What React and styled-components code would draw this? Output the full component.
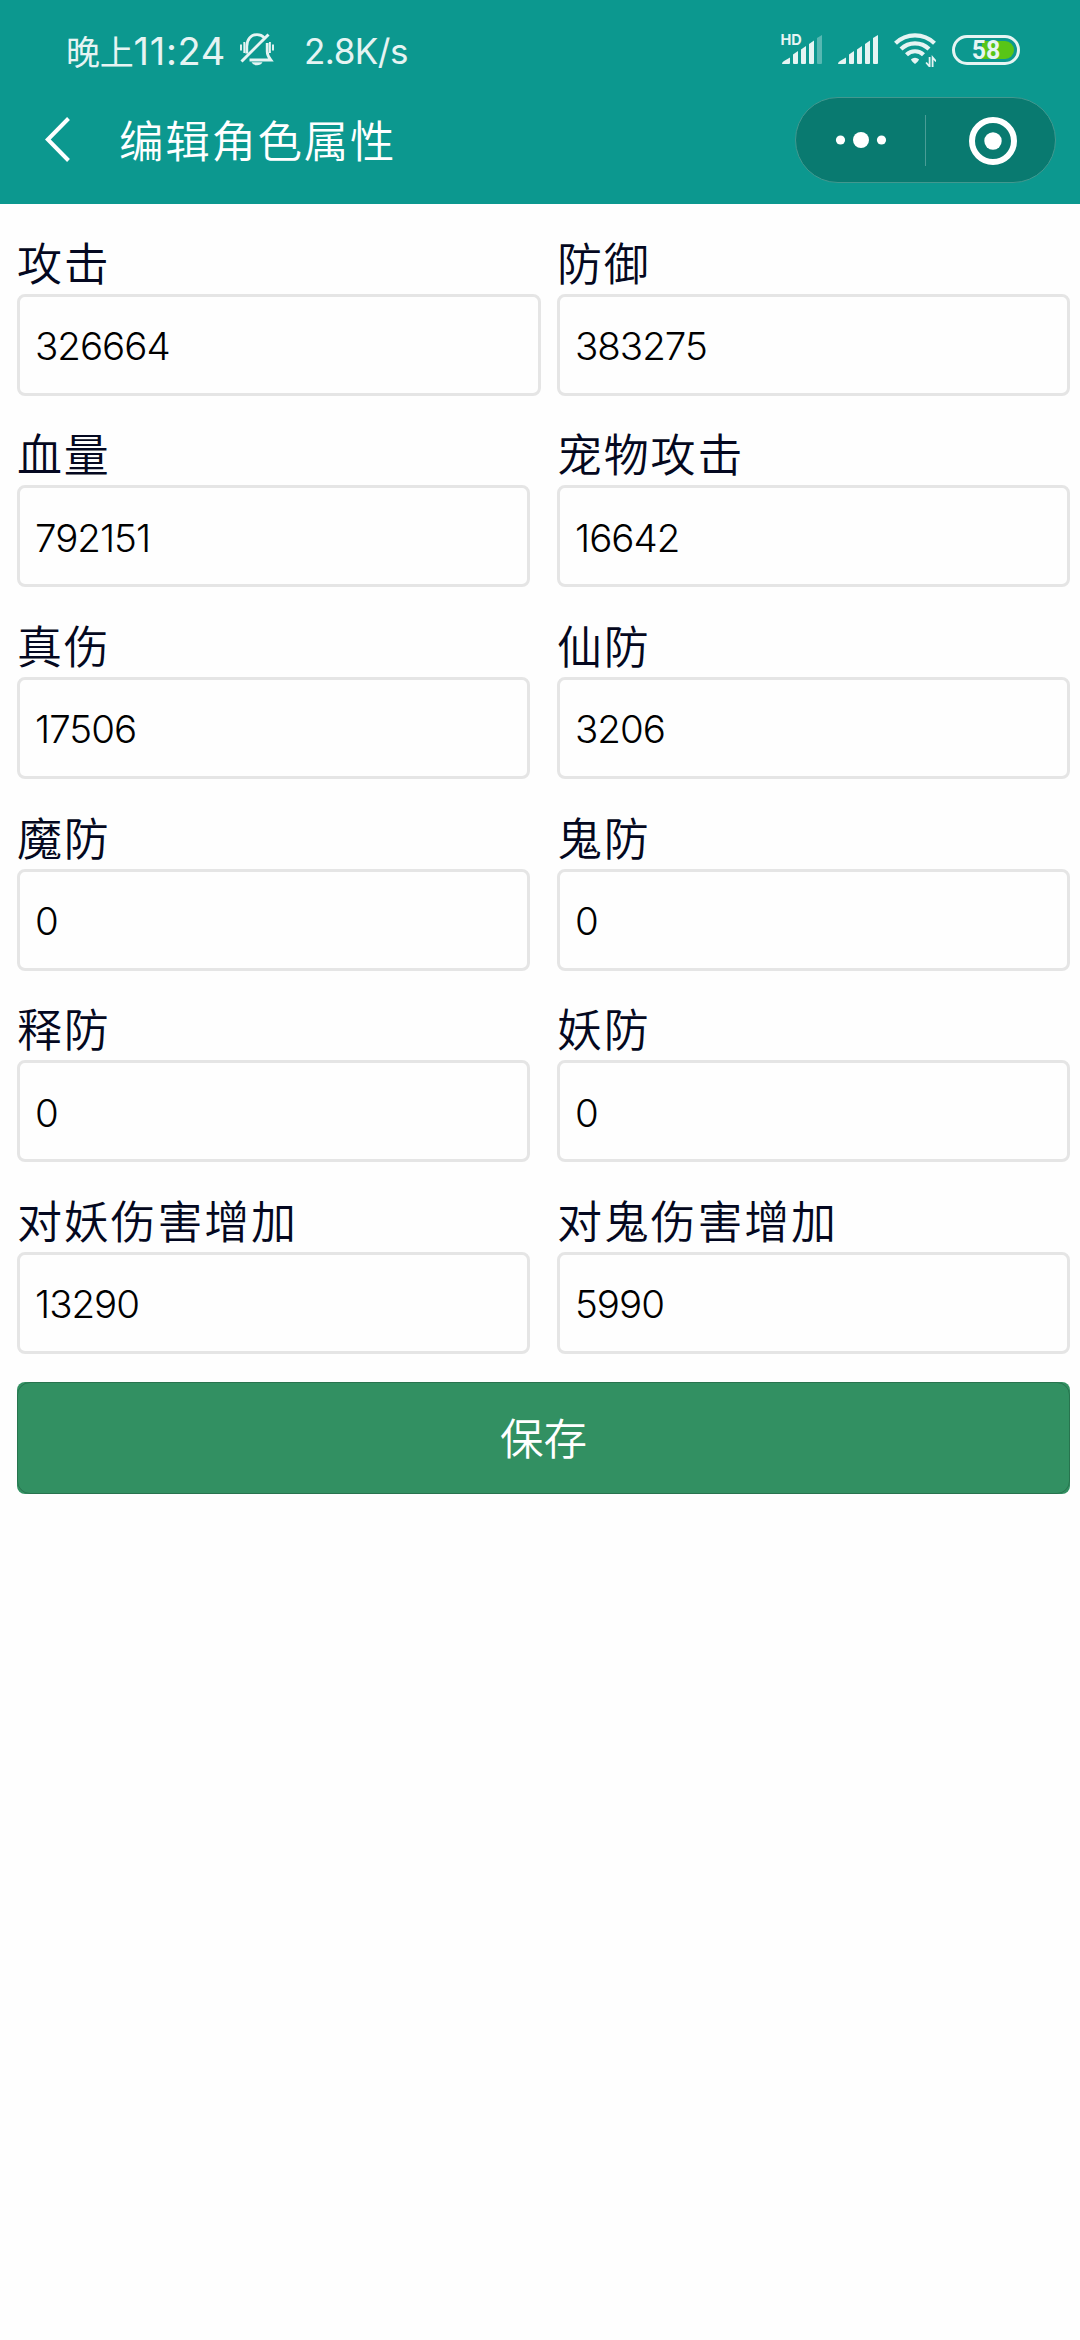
import React from "react";

import styled, { createGlobalStyle } from "styled-components";

const GlobalStyle = createGlobalStyle`
  * {
    box-sizing: border-box;
  }
  body {
    margin: 0;
    background: #fefefe;
    font-family: Inter, "Noto Sans CJK SC", sans-serif;
  }
`;

const Page = styled.div`
  width: 1080px;
  min-height: 2340px;
  background: #fefefe;
`;

const Header = styled.header`
  height: 204px;
  background: #0c988f;
  color: #fff;
`;

const StatusBar = styled.div`
  display: flex;
  align-items: center;
  justify-content: space-between;
  height: 97px;
  padding: 3px 60px 0 66px;
  color: #e6f4f3;
`;

const StatusGroup = styled.div`
  display: flex;
  align-items: center;
`;

const Clock = styled.span`
  display: flex;
  align-items: center;
  width: 174px;
  padding-top: 2px;
  font-size: 38px;
  line-height: 44px;
  letter-spacing: 0.7px;
  white-space: nowrap;
`;

const DayPart = styled.span`
  font-family: "Noto Sans CJK SC", sans-serif;
  font-size: 34px;
  letter-spacing: -0.2px;
`;

const NetSpeed = styled.span`
  margin-left: 30px;
  padding-top: 2px;
  font-size: 35px;
  line-height: 44px;
  letter-spacing: -0.5px;
`;

const Battery = styled.div`
  display: flex;
  align-items: center;
  justify-content: center;
  width: 68px;
  height: 30px;
  margin-left: 16px;
  border: 3px solid #e6f4f3;
  border-radius: 15px;
  padding: 3px;
`;

const BatteryLevel = styled.div`
  display: flex;
  align-items: center;
  justify-content: center;
  width: 56px;
  height: 18px;
  border-radius: 9px;
  padding-top: 2px;
  background: linear-gradient(to left, #58c516 58%, transparent 58%);
  font: 700 25px/18px Roboto, sans-serif;
`;

const NavBar = styled.div`
  display: flex;
  align-items: center;
  height: 107px;
  padding: 0 24px 21px 45px;
`;

const Title = styled.h1`
  flex: 1;
  margin: 0;
  padding: 0 0 2px 47px;
  font-family: "Noto Sans CJK SC DemiLight", "Noto Sans CJK SC", sans-serif;
  font-size: 44.5px;
  font-weight: 400;
  line-height: 60px;
  letter-spacing: 1.7px;
`;

const Capsule = styled.div`
  display: flex;
  align-items: center;
  width: 261px;
  height: 86px;
  border: 1px solid #42988f;
  border-radius: 43px;
  background: #097a70;
`;

const CapsuleButton = styled.button`
  display: flex;
  align-items: center;
  justify-content: center;
  width: 130px;
  height: 100%;
  padding: 0;
  border: 0;
  background: none;
`;

const CapsuleDivider = styled.span`
  width: 1px;
  height: 51px;
  background: #4a9d96;
`;

const Form = styled.form`
  padding: 0 10px 0 17px;
`;

const Row = styled.div`
  display: flex;
  height: 191.67px;
`;

const Field = styled.label`
  display: flex;
  flex-direction: column;
  justify-content: flex-end;
  width: ${props => (props.$last ? 513 : 540)}px;
  padding-right: ${props => props.$gap}px;
`;

const Label = styled.span`
  color: #040820;
  font-family: "Noto Sans CJK SC DemiLight", "Noto Sans CJK SC", sans-serif;
  font-size: 45px;
  font-weight: 400;
  line-height: 65px;
  letter-spacing: 1.8px;
`;

const Input = styled.input`
  width: 100%;
  height: 102px;
  padding: 3px 15px 0;
  border: 3px solid #e5e5e5;
  border-radius: 8px;
  outline: none;
  background: none;
  color: #000;
  font-family: Inter, sans-serif;
  font-size: 38.5px;
  font-weight: 300;
  letter-spacing: -1px;
`;

const SaveButton = styled.button`
  position: relative;
  display: block;
  width: 100%;
  height: 112px;
  margin-top: 28px;
  padding: 0 0 3px;
  border: 0;
  border-radius: 8px;
  background: #329062;
  color: #fff;
  font-family: "Noto Sans CJK SC DemiLight", "Noto Sans CJK SC", sans-serif;
  font-size: 43.5px;

  /* hairline drawn over the button, a bit rounder than the button itself */
  &::after {
    content: "";
    position: absolute;
    inset: 0;
    border: 1.4px solid rgba(0, 0, 0, 0.2);
    border-radius: 13px;
  }
`;

const BellIcon = styled.svg`
  width: 34px;
  height: 34px;
`;

const SignalIcon = styled.svg`
  width: 42px;
  height: 34px;
  margin-right: ${props => props.$gap}px;
  overflow: visible;
`;

const HdText = styled.text`
  font: 700 14.5px Inter, sans-serif;
`;

const rows = [
  [["攻击", "326664"], ["防御", "383275"]],
  [["血量", "792151"], ["宠物攻击", "16642"]],
  [["真伤", "17506"], ["仙防", "3206"]],
  [["魔防", "0"], ["鬼防", "0"]],
  [["释防", "0"], ["妖防", "0"]],
  [["对妖伤害增加", "13290"], ["对鬼伤害增加", "5990"]],
];

const Bell = () => (
  <BellIcon viewBox="0 0 34 34" fill="none" stroke="currentColor">
    <path d="M6.8 20.5V13.5C6.8 6.5 11 1.6 17 1.6c3 0 5.4 1 7.2 3" strokeWidth="2.8" />
    <path d="M27.2 10v8.5c0 3.4 1.4 5.8 3.6 8.5H9.5" strokeWidth="2.8" />
    <path d="M1.5 28.5L28.5 1.5" strokeWidth="3" />
    <path d="M1 11.5v6M4.3 9v11M33 11.5v6M29.9 9v11" strokeWidth="1.9" />
    <path d="M11.5 29.3h11c-1 1.9-3 3-5.5 3s-4.5-1.1-5.5-3z" fill="currentColor" stroke="none" />
  </BellIcon>
);

const Signal = ({ hd, gap }) => (
  <SignalIcon viewBox="0 0 42 34" fill="currentColor" $gap={gap}>
    {hd && <HdText x="-0.5" y="12">HD</HdText>}
    <path d="M1 31q0-2 2-3l6-3.5V30q0 1-1 1z" />
    <path d="M12 21.5l5-3.5V30q0 1-1 1h-3q-1 0-1-1z" />
    <path d="M20 16.5l5-3.5V30q0 1-1 1h-3q-1 0-1-1z" />
    <path d="M28 11l5-3.5V30q0 1-1 1h-3q-1 0-1-1z" />
    <path d="M36 5l5-3V30q0 1-1 1h-3q-1 0-1-1z" opacity={hd ? 0.35 : 1} />
  </SignalIcon>
);

const Wifi = () => (
  <svg width="42" height="34" viewBox="0 0 42 34" fill="none" stroke="currentColor">
    <path d="M1.5 10.3a28 28 0 0 1 39 0" strokeWidth="4.2" />
    <path d="M7 16a20 20 0 0 1 28 0" strokeWidth="4.2" />
    <path d="M12.5 21.8a12 12 0 0 1 17 0" strokeWidth="4.2" />
    <path d="M17 26.2a6 6 0 0 1 8 0q0 1.5-4 4.8-4-3.3-4-4.8z" fill="currentColor" stroke="none" />
    <path d="M35.6 24v9.5l-3.5-4M38.6 34v-9.5l3.5 4" strokeWidth="1.8" />
  </svg>
);

const App = () => {
  return (
    <Page>
      <GlobalStyle />
      <Header>
        <StatusBar>
          <StatusGroup>
            <Clock>
              <DayPart>晚上</DayPart>11:24
            </Clock>
            <Bell />
            <NetSpeed>2.8K/s</NetSpeed>
          </StatusGroup>
          <StatusGroup>
            <Signal hd gap={14} />
            <Signal gap={15} />
            <Wifi />
            <Battery>
              <BatteryLevel>58</BatteryLevel>
            </Battery>
          </StatusGroup>
        </StatusBar>
        <NavBar>
          <svg width="27" height="46" viewBox="0 0 27 46" fill="none" stroke="#fff" strokeWidth="4">
            <path d="M23.5 1.5L2.8 22.5l20.7 21" />
          </svg>
          <Title>编辑角色属性</Title>
          <Capsule>
            <CapsuleButton type="button">
              <svg width="52" height="16" viewBox="0 0 52 16" fill="#fff">
                <circle cx="5.5" cy="8" r="4.6" />
                <circle cx="26" cy="8" r="8" />
                <circle cx="46.5" cy="8" r="4.6" />
              </svg>
            </CapsuleButton>
            <CapsuleDivider />
            <CapsuleButton type="button">
              <svg width="52" height="50" viewBox="0 0 52 50">
                <circle cx="28" cy="26" r="21" fill="none" stroke="#fff" strokeWidth="6" />
                <circle cx="28" cy="26" r="8.7" fill="#fff" />
              </svg>
            </CapsuleButton>
          </Capsule>
        </NavBar>
      </Header>
      <Form>
        {rows.map(([left, right], i) => (
          <Row key={left[0]}>
            <Field $gap={i === 0 ? 16 : 27}>
              <Label>{left[0]}</Label>
              <Input defaultValue={left[1]} />
            </Field>
            <Field $gap={0} $last>
              <Label>{right[0]}</Label>
              <Input defaultValue={right[1]} />
            </Field>
          </Row>
        ))}
        <SaveButton type="button">保存</SaveButton>
      </Form>
    </Page>
  );
};

export default App;
